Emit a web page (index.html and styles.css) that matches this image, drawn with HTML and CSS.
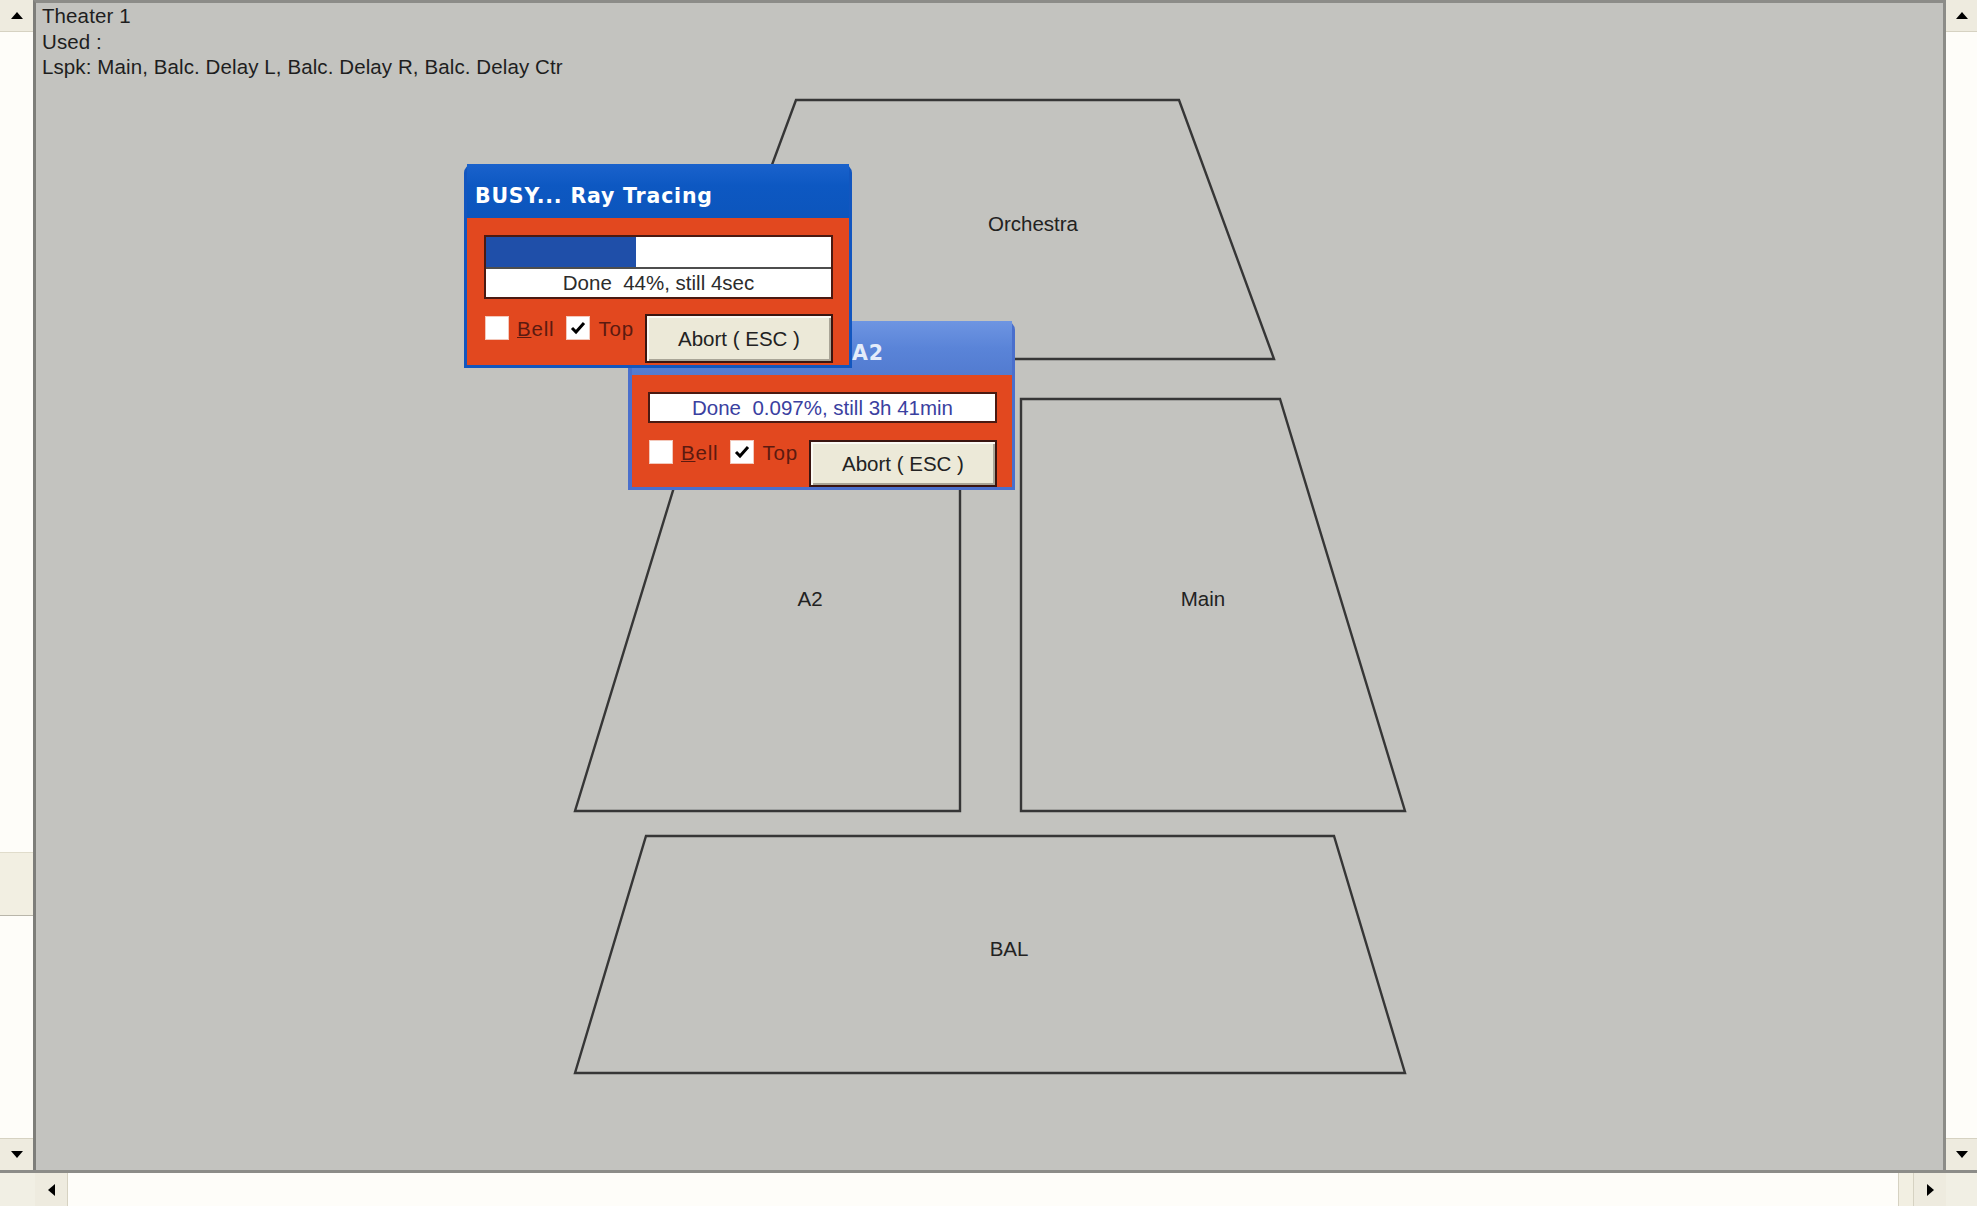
FILE: index.html
```html
<!DOCTYPE html>
<html>
<head>
<meta charset="utf-8">
<link rel="stylesheet" href="styles.css">
</head>
<body>
<div class="app">
  <div class="main-row">
    <div class="vscroll vscroll-left">
      <div class="sbtn sbtn-v"><svg width="12" height="7" viewBox="0 0 12 7"><polygon points="6,0 12,7 0,7" fill="#000"/></svg></div>
      <div class="track">
        <div class="thumb thumb-left"></div>
      </div>
      <div class="sbtn sbtn-v"><svg width="12" height="7" viewBox="0 0 12 7"><polygon points="0,0 12,0 6,7" fill="#000"/></svg></div>
    </div>

    <div class="canvas">
      <div class="info">
        <div>Theater 1</div>
        <div>Used :</div>
        <div>Lspk: Main, Balc. Delay L, Balc. Delay R, Balc. Delay Ctr</div>
      </div>

      <svg class="plan" width="1907" height="1167" viewBox="36 3 1907 1167">
        <g fill="none" stroke="#363636" stroke-width="2.4">
          <polygon points="796,100 1179,100 1274,359 700,359"/>
          <polygon points="701,399 960,399 960,811 575,811"/>
          <polygon points="1021,399 1280,399 1405,811 1021,811"/>
          <polygon points="646,836 1334,836 1405,1073 575,1073"/>
        </g>
        <g class="lbl" text-anchor="middle" dominant-baseline="central">
          <text x="1033" y="223">Orchestra</text>
          <text x="810" y="598">A2</text>
          <text x="1203" y="598">Main</text>
          <text x="1009" y="948">BAL</text>
        </g>
      </svg>

      <div class="dlg dlg2">
        <div class="title title2">A2</div>
        <div class="body body2">
          <div class="tbox">Done &nbsp;0.097%, still 3h 41min</div>
          <div class="row row2">
            <span class="chk"></span>
            <span class="clabel"><u>B</u>ell</span>
            <span class="chk checked"><svg width="16" height="14" viewBox="0 0 16 14"><path d="M2 7 L6 11 L14 2" fill="none" stroke="#000" stroke-width="3"/></svg></span>
            <span class="clabel">Top</span>
            <span class="btn btn2">Abort ( ESC )</span>
          </div>
        </div>
      </div>

      <div class="dlg dlg1">
        <div class="title title1">BUSY... Ray Tracing</div>
        <div class="body body1">
          <div class="pbox">
            <div class="bar"><div class="fill" style="width:43.5%"></div></div>
            <div class="ptext">Done &nbsp;44%, still 4sec</div>
          </div>
          <div class="row row1">
            <span class="chk"></span>
            <span class="clabel"><u>B</u>ell</span>
            <span class="chk checked"><svg width="16" height="14" viewBox="0 0 16 14"><path d="M2 7 L6 11 L14 2" fill="none" stroke="#000" stroke-width="3"/></svg></span>
            <span class="clabel">Top</span>
            <span class="btn btn1">Abort ( ESC )</span>
          </div>
        </div>
      </div>
    </div>

    <div class="vscroll vscroll-right">
      <div class="sbtn sbtn-v"><svg width="12" height="7" viewBox="0 0 12 7"><polygon points="6,0 12,7 0,7" fill="#000"/></svg></div>
      <div class="track"></div>
      <div class="sbtn sbtn-v"><svg width="12" height="7" viewBox="0 0 12 7"><polygon points="0,0 12,0 6,7" fill="#000"/></svg></div>
    </div>
  </div>

  <div class="bottom-row">
    <div class="corner corner-left"></div>
    <div class="hscroll">
      <div class="sbtn sbtn-h"><svg width="7" height="12" viewBox="0 0 7 12"><polygon points="0,6 7,0 7,12" fill="#000"/></svg></div>
      <div class="htrack"><div class="hthumb"></div></div>
      <div class="sbtn sbtn-h"><svg width="7" height="12" viewBox="0 0 7 12"><polygon points="0,0 7,6 0,12" fill="#000"/></svg></div>
    </div>
    <div class="corner corner-right"></div>
  </div>
</div>
</body>
</html>
```

FILE: styles.css
```css
html, body {
  margin: 0;
  padding: 0;
  background: #c3c3bf;
}
body {
  width: 1977px;
  height: 1206px;
  overflow: hidden;
  font-family: "Liberation Sans", Arial, sans-serif;
}
.app {
  display: flex;
  flex-direction: column;
  width: 1977px;
  height: 1206px;
}
.main-row {
  display: flex;
  height: 1170px;
}
.vscroll {
  display: flex;
  flex-direction: column;
  background: #fefdf8;
}
.vscroll-left { width: 33px; }
.vscroll-right { width: 31px; }
.sbtn {
  box-sizing: border-box;
  display: flex;
  align-items: center;
  justify-content: center;
  background: #eeebdf;
}
.sbtn-v {
  height: 32px;
  border-bottom: 1px solid #d6d2c2;
}
.vscroll .sbtn-v:last-child {
  border-top: 1px solid #d6d2c2;
  border-bottom: none;
}
.track {
  flex: 1;
  background: #fefdf9;
}
.thumb {
  background: #f2efe2;
  border-top: 1px solid #e0dccb;
  border-bottom: 1px solid #b9b6aa;
}
.thumb-left {
  margin-top: 820px;
  height: 62px;
}
.canvas {
  position: relative;
  flex: 1;
  background: #c3c3bf;
  border-top: 3px solid #8c8c88;
  border-left: 3px solid #7e7e7a;
  border-right: 3px solid #8c8c88;
}
.info {
  position: relative;
  z-index: 1;
  padding: 0 0 0 6px;
  font-size: 20.5px;
  line-height: 25.5px;
  color: #1e1e1e;
  letter-spacing: 0.1px;
}
.plan {
  position: absolute;
  left: 0;
  top: 0;
}
.lbl {
  font-family: "Liberation Sans", Arial, sans-serif;
  font-size: 20.5px;
  fill: #222;
}

/* dialogs */
.dlg {
  position: absolute;
  box-sizing: border-box;
  border-radius: 9px 9px 0 0;
}
.dlg1 {
  left: 428px;
  top: 161px;
  width: 388px;
  background: #1256bf;
  padding: 0 3px 3px 3px;
  z-index: 3;
}
.dlg2 {
  left: 592px;
  top: 318px;
  width: 387px;
  background: #4a6fcc;
  padding: 0 3px 3px 4px;
  z-index: 2;
}
.title {
  height: 54px;
  box-sizing: border-box;
  display: flex;
  align-items: center;
  font-family: "DejaVu Sans", Verdana, sans-serif;
  font-weight: bold;
  font-size: 20.5px;
  letter-spacing: 0.8px;
  color: #fff;
}
.title1 {
  padding: 10px 0 0 8px;
  background: linear-gradient(#1a62cc, #0d58c2 40%, #0c55bc);
}
.title2 {
  padding: 10px 0 0 220px;
  background: linear-gradient(#6e95e2, #5a84d8 50%, #527bd0);
  color: #e4ecfa;
}
.body {
  background: #e2481f;
  font-family: "Liberation Sans", Arial, sans-serif;
  font-size: 20.5px;
}
.body1 { padding: 17px 16px 2px 17px; }
.body2 { padding: 17px 15px 0 16px; }

.pbox {
  border: 2px solid #4a1a12;
  background: #fff;
}
.bar {
  display: flex;
  height: 30px;
  border-bottom: 2px solid #4e4e4e;
}
.fill {
  background: #1f4fa9;
}
.ptext {
  height: 28px;
  line-height: 28px;
  text-align: center;
  color: #2c2c2c;
}
.tbox {
  border: 2px solid #4a1a12;
  background: #fff;
  height: 27px;
  line-height: 27px;
  text-align: center;
  color: #3a40a0;
}
.row {
  display: flex;
  align-items: flex-start;
}
.row1 { margin-top: 15px; height: 49px; }
.row2 { margin-top: 17px; height: 47px; }
.chk {
  box-sizing: border-box;
  width: 24px;
  height: 24px;
  background: #fff;
  border: 1px solid #f3c8bb;
  margin-left: 1px;
  display: flex;
  align-items: center;
  justify-content: center;
}
.row1 .chk { margin-top: 2px; }
.chk.checked { margin-left: 12px; }
.clabel {
  margin-left: 8px;
  line-height: 28px;
  color: #5c1a10;
  letter-spacing: 0.8px;
}
.row1 .clabel { margin-top: 1px; }
.row2 .clabel { margin-top: -1px; }
.clabel u { text-decoration-thickness: 1px; }
.btn {
  box-sizing: border-box;
  width: 188px;
  margin-left: auto;
  display: flex;
  align-items: center;
  justify-content: center;
  background: #ece9d8;
  border: 2px solid #3a1510;
  box-shadow: inset 2px 2px 0 #fbfaf4, inset -2px -2px 0 #a9a597;
  color: #222;
}
.btn1 { height: 49px; }
.btn2 { height: 47px; }

/* bottom */
.bottom-row {
  display: flex;
  height: 36px;
  box-sizing: border-box;
  border-top: 3px solid #8c8c88;
  background: #fefdf8;
}
.corner {
  background: #f1efe4;
}
.corner-left { width: 35px; }
.corner-right { width: 31px; }
.hscroll {
  flex: 1;
  display: flex;
}
.sbtn-h {
  width: 33px;
  border-right: 1px solid #d6d2c2;
}
.hscroll .sbtn-h:last-child {
  border-right: none;
  border-left: 1px solid #d6d2c2;
}
.htrack {
  flex: 1;
  display: flex;
  justify-content: flex-end;
  background: #fefdf9;
}
.hthumb {
  width: 14px;
  background: #f2efe2;
  border-left: 1px solid #d6d2c2;
}
```
